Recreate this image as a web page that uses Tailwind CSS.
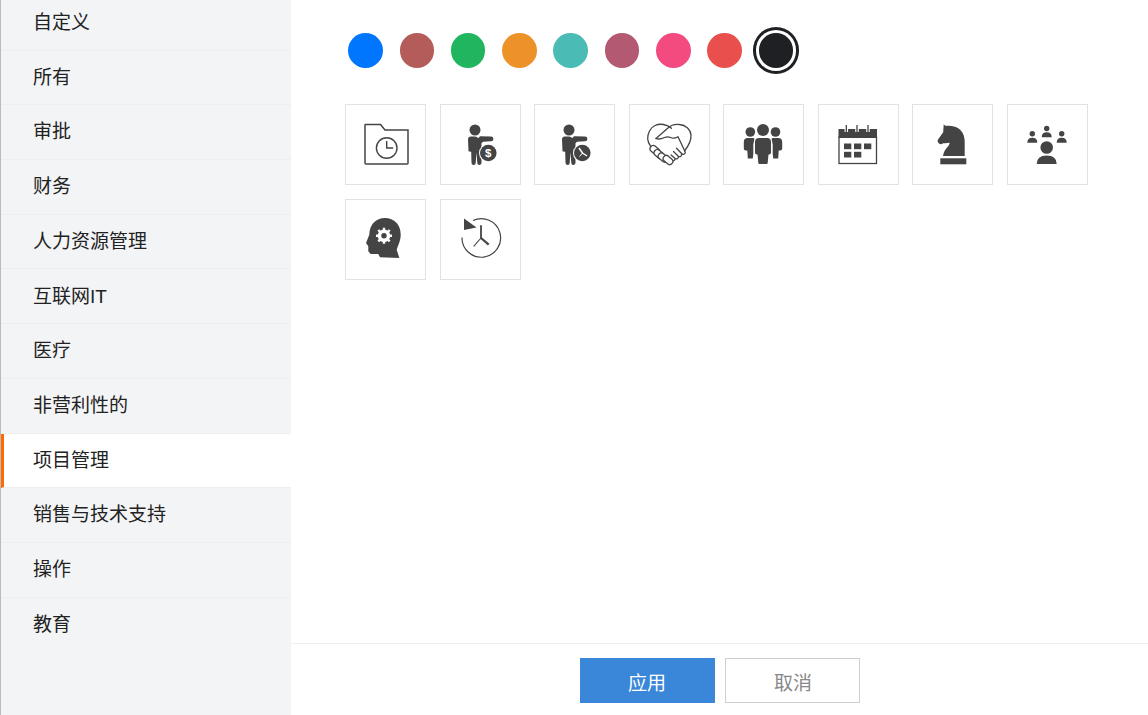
<!DOCTYPE html>
<html lang="zh">
  <head>
    <meta charset="UTF-8" />
    <title>模板</title>
    <script src="https://cdn.jsdelivr.net/npm/@tailwindcss/browser@4"></script>
  </head>
  <body class="font-['Liberation_Sans','Noto_Sans_CJK_SC',sans-serif] bg-white">
    <div class="flex w-[1148px] h-[715px] overflow-hidden">
      <!-- sidebar -->
      <aside class="w-[291px] h-full shrink-0 bg-[#f3f4f6] border-l border-[#bbbbbb] overflow-hidden">
        <ul class="-mt-[4px] text-[19px] text-[#222222]">
          <li class="h-[54.7px] pl-[32px] pt-[1px] flex items-center border-b border-[#eeeeee]">自定义</li>
          <li class="h-[54.7px] pl-[32px] pt-[1px] flex items-center border-b border-[#eeeeee]">所有</li>
          <li class="h-[54.7px] pl-[32px] pt-[1px] flex items-center border-b border-[#eeeeee]">审批</li>
          <li class="h-[54.7px] pl-[32px] pt-[1px] flex items-center border-b border-[#eeeeee]">财务</li>
          <li class="h-[54.7px] pl-[32px] pt-[1px] flex items-center border-b border-[#eeeeee]">人力资源管理</li>
          <li class="h-[54.7px] pl-[32px] pt-[1px] flex items-center border-b border-[#eeeeee]">互联网IT</li>
          <li class="h-[54.7px] pl-[32px] pt-[1px] flex items-center border-b border-[#eeeeee]">医疗</li>
          <li class="h-[54.7px] pl-[32px] pt-[1px] flex items-center border-b border-[#eeeeee]">非营利性的</li>
          <li class="h-[54.7px] pl-[29px] pt-[1px] flex items-center border-b border-[#eeeeee] border-l-[3px] border-l-[#ff6a00] bg-white">项目管理</li>
          <li class="h-[54.7px] pl-[32px] pt-[1px] flex items-center border-b border-[#eeeeee]">销售与技术支持</li>
          <li class="h-[54.7px] pl-[32px] pt-[1px] flex items-center border-b border-[#eeeeee]">操作</li>
          <li class="h-[54.7px] pl-[32px] pt-[1px] flex items-center">教育</li>
        </ul>
      </aside>

      <!-- main -->
      <main class="flex-1 flex flex-col h-full">
        <div class="flex-1 pl-[54px]">
          <!-- colours -->
          <div class="flex gap-[16.8px] pl-[3.3px] pt-[33px]">
            <span class="w-[34.5px] h-[34.5px] rounded-full bg-[#0076ff]"></span>
            <span class="w-[34.5px] h-[34.5px] rounded-full bg-[#b35c5a]"></span>
            <span class="w-[34.5px] h-[34.5px] rounded-full bg-[#20b55e]"></span>
            <span class="w-[34.5px] h-[34.5px] rounded-full bg-[#ec9229]"></span>
            <span class="w-[34.5px] h-[34.5px] rounded-full bg-[#4bbcb5]"></span>
            <span class="w-[34.5px] h-[34.5px] rounded-full bg-[#b35a72]"></span>
            <span class="w-[34.5px] h-[34.5px] rounded-full bg-[#f34a80]"></span>
            <span class="w-[34.5px] h-[34.5px] rounded-full bg-[#e94f4c]"></span>
            <span class="w-[34.5px] h-[34.5px] rounded-full bg-[#1f2024] shadow-[0_0_0_3px_#ffffff,0_0_0_6px_#1f2024]"></span>
          </div>

          <!-- icons -->
          <div class="grid grid-cols-[repeat(8,81px)] gap-x-[13.5px] gap-y-[14px] mt-[36px]">
            <div class="w-[81px] h-[81px] border border-[#e2e2e2]">
              <svg class="w-[79px] h-[79px]" viewBox="1 1 79 79" fill="none" stroke="#444444">
                <path stroke-width="1.5" d="M20.500 20.500h15l4.500 5.500h23v33a1 1 0 0 1-1 1h-41a1 1 0 0 1-1-1v-38a.5.5 0 0 1 .5-.5z" />
                <circle stroke-width="1.4" cx="41.700" cy="44" r="10.300" />
                <path stroke-width="1.4" d="M41.700 37v7h6.500" />
              </svg>
            </div>
            <div class="w-[81px] h-[81px] border border-[#e2e2e2]">
              <svg class="w-[79px] h-[79px]" viewBox="1 1 79 79" fill="#444444">
                <circle cx="35" cy="26" r="5.500" />
                <path d="M28 35.500q0-3 3-3h4.500l3 1.500 1.500-1.700 11 .2a2.400 2.400 0 0 1 0 4.800l-8 .5-1.500 1.500v19.500a2.100 2.100 0 0 1-4.200.2l-.8-10.500-.8 10.500a2.100 2.100 0 0 1-4.200-.2l-.3-11-.7 0-2-.5z" />
                <circle cx="48.300" cy="49" r="9.300" fill="#ffffff" />
                <circle cx="48.300" cy="49" r="8.300" />
                <text x="48.300" y="53.200" font-size="11.500" font-weight="700" text-anchor="middle" fill="#ffffff" font-family="Liberation Sans">$</text>
              </svg>
            </div>
            <div class="w-[81px] h-[81px] border border-[#e2e2e2]">
              <svg class="w-[79px] h-[79px]" viewBox="1 1 79 79" fill="#444444">
                <circle cx="35" cy="26" r="5.500" />
                <path d="M28 35.500q0-3 3-3h4.500l3 1.500 1.500-1.700 11 .2a2.400 2.400 0 0 1 0 4.800l-8 .5-1.500 1.500v19.500a2.100 2.100 0 0 1-4.200.2l-.8-10.500-.8 10.500a2.100 2.100 0 0 1-4.200-.2l-.3-11-.7 0-2-.5z" />
                <circle cx="48.300" cy="49" r="9.300" fill="#ffffff" />
                <circle cx="48.300" cy="49" r="8.300" />
                <path stroke="#ffffff" stroke-width="1.500" fill="none" d="M45 44l3.500 5 4.500 3" />
                <path stroke="#ffffff" stroke-width="1" fill="none" d="M48.500 49l-3 3.500" />
              </svg>
            </div>
            <div class="w-[81px] h-[81px] border border-[#e2e2e2]">
              <svg class="w-[79px] h-[79px]" viewBox="1 1 79 79" fill="none" stroke="#444444" stroke-width="1.300" stroke-linejoin="round" stroke-linecap="round">
                <path d="M21.500 42c-3-4-3.500-10-1-15 2-5 8-7.500 14-6.500 3 .5 6 2 8 3.800" />
                <path d="M27 34.500l12-10.500c3-3 7-4 11.500-3.500 6 .5 11 4.500 11.500 10.500.4 6-3 11.500-6.500 16" />
                <path d="M27 34.500c3 1.200 6 .2 8.500-1 2-.8 4-1 6 0 2 1 4.500 1 7.500-.8l7 14.800c1 2-1.500 3.800-3.200 2.300l-5.300-5.500" />
                <path d="M52.500 49.800c.8 2-1.500 3.700-3.200 2.400l-4.800-4.700M49.300 52.200c.6 2-1.500 3.400-3.200 2.300l-4-3.600M46 54.500c.2 1.800-1.500 2.800-3 2" />
                <rect x="20.700" y="43" width="10.600" height="6.400" rx="3.200" transform="rotate(40 26 46)" fill="#ffffff" />
                <rect x="24.700" y="47" width="10.600" height="6.400" rx="3.200" transform="rotate(40 30 50)" fill="#ffffff" />
                <rect x="28.700" y="50.300" width="10.600" height="6.400" rx="3.200" transform="rotate(40 34 53.500)" fill="#ffffff" />
                <rect x="33.700" y="52.800" width="10.600" height="6.400" rx="3.200" transform="rotate(40 39 56)" fill="#ffffff" />
              </svg>
            </div>
            <div class="w-[81px] h-[81px] border border-[#e2e2e2]">
              <svg class="w-[79px] h-[79px]" viewBox="1 1 79 79" fill="#444444">
                <circle cx="40" cy="26" r="6" />
                <circle cx="27.300" cy="28" r="4.800" />
                <circle cx="52.500" cy="28" r="4.800" />
                <path d="M20.800 38q0-4 4-4h5.500q1.500 0 1 1.500l-1 5v9l-.5 5h-5l-.5-8h-1.500q-2 0-2-2z" />
                <path d="M59.200 38q0-4-4-4h-5.500q-1.500 0-1 1.500l1 5v9l.5 5h5l.5-8h1.500q2 0 2-2z" />
                <path d="M32 38q0-4 4-4h8q4 0 4 4v10.500q0 2-2 2h-.5l-.8 8.500q-.2 1-1 1h-7.400q-.8 0-1-1l-.8-8.500h-.5q-2 0-2-2z" />
              </svg>
            </div>
            <div class="w-[81px] h-[81px] border border-[#e2e2e2]">
              <svg class="w-[79px] h-[79px]" viewBox="1 1 79 79" fill="#444444">
                <rect x="20.500" y="25" width="38.500" height="9" />
                <rect x="21" y="33" width="37.500" height="26.500" fill="none" stroke="#444444" stroke-width="1.300" />
                <path stroke="#ffffff" stroke-width="3.500" d="M28.300 21v7M39 21v7M50 21v7" />
                <path stroke="#444444" stroke-width="1.300" d="M28.300 21v7M39 21v7M50 21v7" />
                <rect x="26" y="39.500" width="7.300" height="5.700" />
                <rect x="36" y="39.500" width="7.300" height="5.700" />
                <rect x="46" y="39.500" width="7.300" height="5.700" />
                <rect x="26" y="47.800" width="7.300" height="5.700" />
                <rect x="36" y="47.800" width="7.300" height="5.700" />
              </svg>
            </div>
            <div class="w-[81px] h-[81px] border border-[#e2e2e2]">
              <svg class="w-[79px] h-[79px]" viewBox="1 1 79 79" fill="#444444">
                <path d="M31.700 20.300l1.500 1.500c6-.5 12 .5 15 4 3.500 3.500 4.500 8 4.500 12v14.200h-21.700c.5-4 2.500-7 4.500-9 1.500-1.500 2-3 2-4.500-2.500.8-4.500.7-6.500.7-1.500 1.500-3.500 1-4.500-.2-1-1-1.200-2.500-.3-3.700l5-7z" />
                <rect x="28.300" y="54.300" width="26" height="6" />
              </svg>
            </div>
            <div class="w-[81px] h-[81px] border border-[#e2e2e2]">
              <svg class="w-[79px] h-[79px]" viewBox="1 1 79 79" fill="#444444">
                <circle cx="39.700" cy="43.500" r="6.300" />
                <path d="M29.700 60q0-8.500 10-8.500t10 8.500z" />
                <circle cx="39.700" cy="24.500" r="2.700" />
                <path d="M34.700 33.300q0-5 5-5t5 5z" />
                <circle cx="25.300" cy="29.800" r="2.700" />
                <path d="M20.300 38.800q0-5 5-5t5 5z" />
                <circle cx="54.700" cy="29.800" r="2.700" />
                <path d="M49.700 38.800q0-5 5-5t5 5z" />
              </svg>
            </div>
            <div class="w-[81px] h-[81px] border border-[#e2e2e2]">
              <svg class="w-[79px] h-[79px]" viewBox="1 1 79 79" fill="#444444">
                <path d="M28.300 24q5-5 11.700-5t11.700 5q4 4.500 4 11.700c0 6-2.500 10-4 15l2.600 8.300-19.300-.7-1.700-3.300h-7.600l-2.400-2.700v-5l-2.300-3.300 3.300-8.300q0-7 4-11.700z" />
                <circle cx="39" cy="36.700" r="4.500" fill="none" stroke="#ffffff" stroke-width="3.600" />
                <path stroke="#ffffff" stroke-width="2.400" d="M39 28.700v2.500M39 42.200v2.500M31 36.700h2.500M44.500 36.700h2.500M33.300 31l1.800 1.800M42.900 40.600l1.800 1.800M33.300 42.400l1.800-1.800M42.900 32.800l1.800-1.800" />
              </svg>
            </div>
            <div class="w-[81px] h-[81px] border border-[#e2e2e2]">
              <svg class="w-[79px] h-[79px]" viewBox="1 1 79 79" fill="#444444">
                <path fill="none" stroke="#444444" stroke-width="1.200" d="M33 21.500a19.300 19.300 0 1 1-11 17" />
                <path d="M24 19.500l12.500 9-12.500 2.500z" />
                <path fill="none" stroke="#444444" stroke-width="1.800" d="M41 26.300v12.700" />
                <path fill="none" stroke="#444444" stroke-width="2.200" d="M41 39l7.700 6.700" />
                <path fill="none" stroke="#444444" stroke-width="1.100" d="M41 39l-7.300 8.300" />
              </svg>
            </div>
          </div>
        </div>

        <!-- footer -->
        <footer class="h-[72px] border-t border-[#eeeeee] flex justify-center gap-[10px] pt-[14px] text-[19px]">
          <button class="w-[135px] h-[45px] pt-[8px] bg-[#3a87da] text-white">应用</button>
          <button class="w-[135px] h-[45px] pt-[8px] pl-[2px] bg-white border border-[#cfcfcf] text-[#888888]">取消</button>
        </footer>
      </main>
    </div>
  </body>
</html>
